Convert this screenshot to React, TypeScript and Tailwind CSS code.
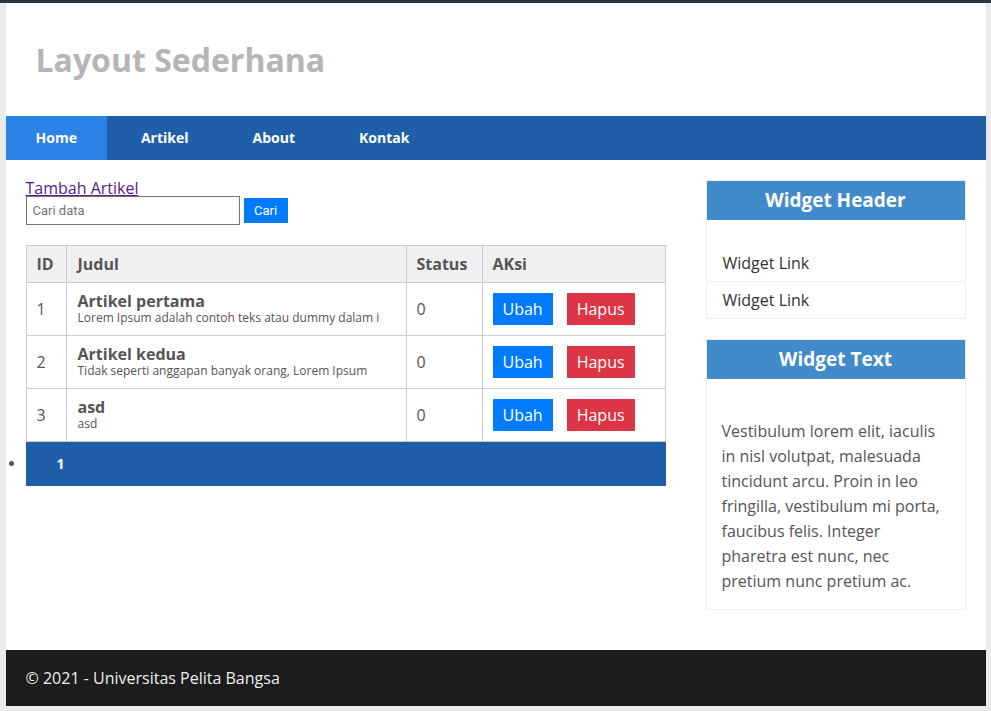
import React from "react";

const rows = [
  { id: 1, title: "Artikel pertama", desc: "Lorem Ipsum adalah contoh teks atau dummy dalam i" },
  { id: 2, title: "Artikel kedua", desc: "Tidak seperti anggapan banyak orang, Lorem Ipsum" },
  { id: 3, title: "asd", desc: "asd" },
];

export default function App() {
  return (
    <div className="min-h-[711px] bg-[#ebebeb] font-['Open_Sans',sans-serif] text-[#555]">
      <div className="h-[3px] bg-[#2c3540]" />
      <div className="mx-auto w-[980px] bg-white">
        <header className="flex h-[113px] items-center px-[30px]">
          <h1 className="text-[32px] font-bold leading-none text-[#b5b5b5]">Layout Sederhana</h1>
        </header>

        <nav className="flex h-[44px] gap-1 bg-[#1f5faa] text-[14px] font-bold leading-[42px] text-white">
          <a className="flex items-center bg-[#2b83e6] px-[30px]">Home</a>
          <a className="flex items-center px-[30px]">Artikel</a>
          <a className="flex items-center px-[30px]">About</a>
          <a className="flex items-center px-[30px]">Kontak</a>
        </nav>

        <div className="flex gap-[40px] px-[20px] pt-[20px] pb-[40px]">
          <main className="w-[640px]">
            <a className="block text-[16px] leading-[16px] text-[#551a8b] underline">Tambah Artikel</a>
            <div className="flex items-center gap-[4px]">
              <input
                placeholder="Cari data"
                className="h-[29px] w-[214px] border border-[#767676] px-[6px] font-['Roboto',sans-serif] text-[13px] placeholder:text-[#757575]"
              />
              <button className="h-[25px] w-[44px] bg-[#007bff] font-['Roboto',sans-serif] text-[13px] text-white">Cari</button>
            </div>

            <table className="mt-[20px] w-[640px] border-collapse text-[16px]">
              <thead>
                <tr className="h-[37px] bg-[#f0f0f0] text-left font-bold">
                  <th className="w-[40px] border border-[#ccc] px-[10px]">ID</th>
                  <th className="w-[340px] border border-[#ccc] pr-[10px] pl-[11px]">Judul</th>
                  <th className="w-[76px] border border-[#ccc] px-[10px]">Status</th>
                  <th className="border border-[#ccc] px-[10px]">AKsi</th>
                </tr>
              </thead>
              <tbody>
                {rows.map((r) => (
                  <tr key={r.id} className="h-[53px]">
                    <td className="border border-[#ccc] px-[10px]">{r.id}</td>
                    <td className="border border-[#ccc] pr-[10px] pl-[11px]">
                      <div className="text-[16px] font-bold leading-[18px]">{r.title}</div>
                      <div className="text-[12px] leading-[16px]">{r.desc}</div>
                    </td>
                    <td className="border border-[#ccc] px-[10px]">0</td>
                    <td className="border border-[#ccc] px-[10px]">
                      <div className="flex gap-[14px]">
                        <button className="h-[32px] bg-[#007bff] px-[10px] text-white">Ubah</button>
                        <button className="h-[32px] bg-[#dc3545] px-[10px] text-white">Hapus</button>
                      </div>
                    </td>
                  </tr>
                ))}
              </tbody>
            </table>

            <ul className="list-outside list-disc">
              <li className="h-[44px] bg-[#1f5faa] text-[14px] font-bold leading-[44px] text-[#555]">
                <a className="px-[31px] text-white">1</a>
              </li>
            </ul>
          </main>

          <aside className="flex w-[260px] flex-col gap-[20px]">
            <div className="border border-[#eee]">
              <h3 className="flex h-[39px] items-center justify-center bg-[#428bca] text-[19px] font-bold text-white">Widget Header</h3>
              <ul className="pt-[25px] text-[16px] text-[#333]">
                <li className="flex h-[37px] items-center border-b border-[#eee] px-[16px]">Widget Link</li>
                <li className="flex h-[36px] items-center px-[16px]">Widget Link</li>
              </ul>
            </div>
            <div className="border border-[#eee]">
              <h3 className="flex h-[39px] items-center justify-center bg-[#428bca] text-[19px] font-bold text-white">Widget Text</h3>
              <p className="px-[15px] pt-[40px] pb-[15px] text-[16px] leading-[25px]">
                Vestibulum lorem elit, iaculis in nisl volutpat, malesuada tincidunt arcu. Proin in leo fringilla, vestibulum mi porta, faucibus felis. Integer pharetra est nunc, nec pretium nunc pretium ac.
              </p>
            </div>
          </aside>
        </div>

        <footer className="flex h-[56px] items-center bg-[#1c1c1c] px-[20px] text-[16px] text-[#eee]">
          © 2021 - Universitas Pelita Bangsa
        </footer>
      </div>
    </div>
  );
}
